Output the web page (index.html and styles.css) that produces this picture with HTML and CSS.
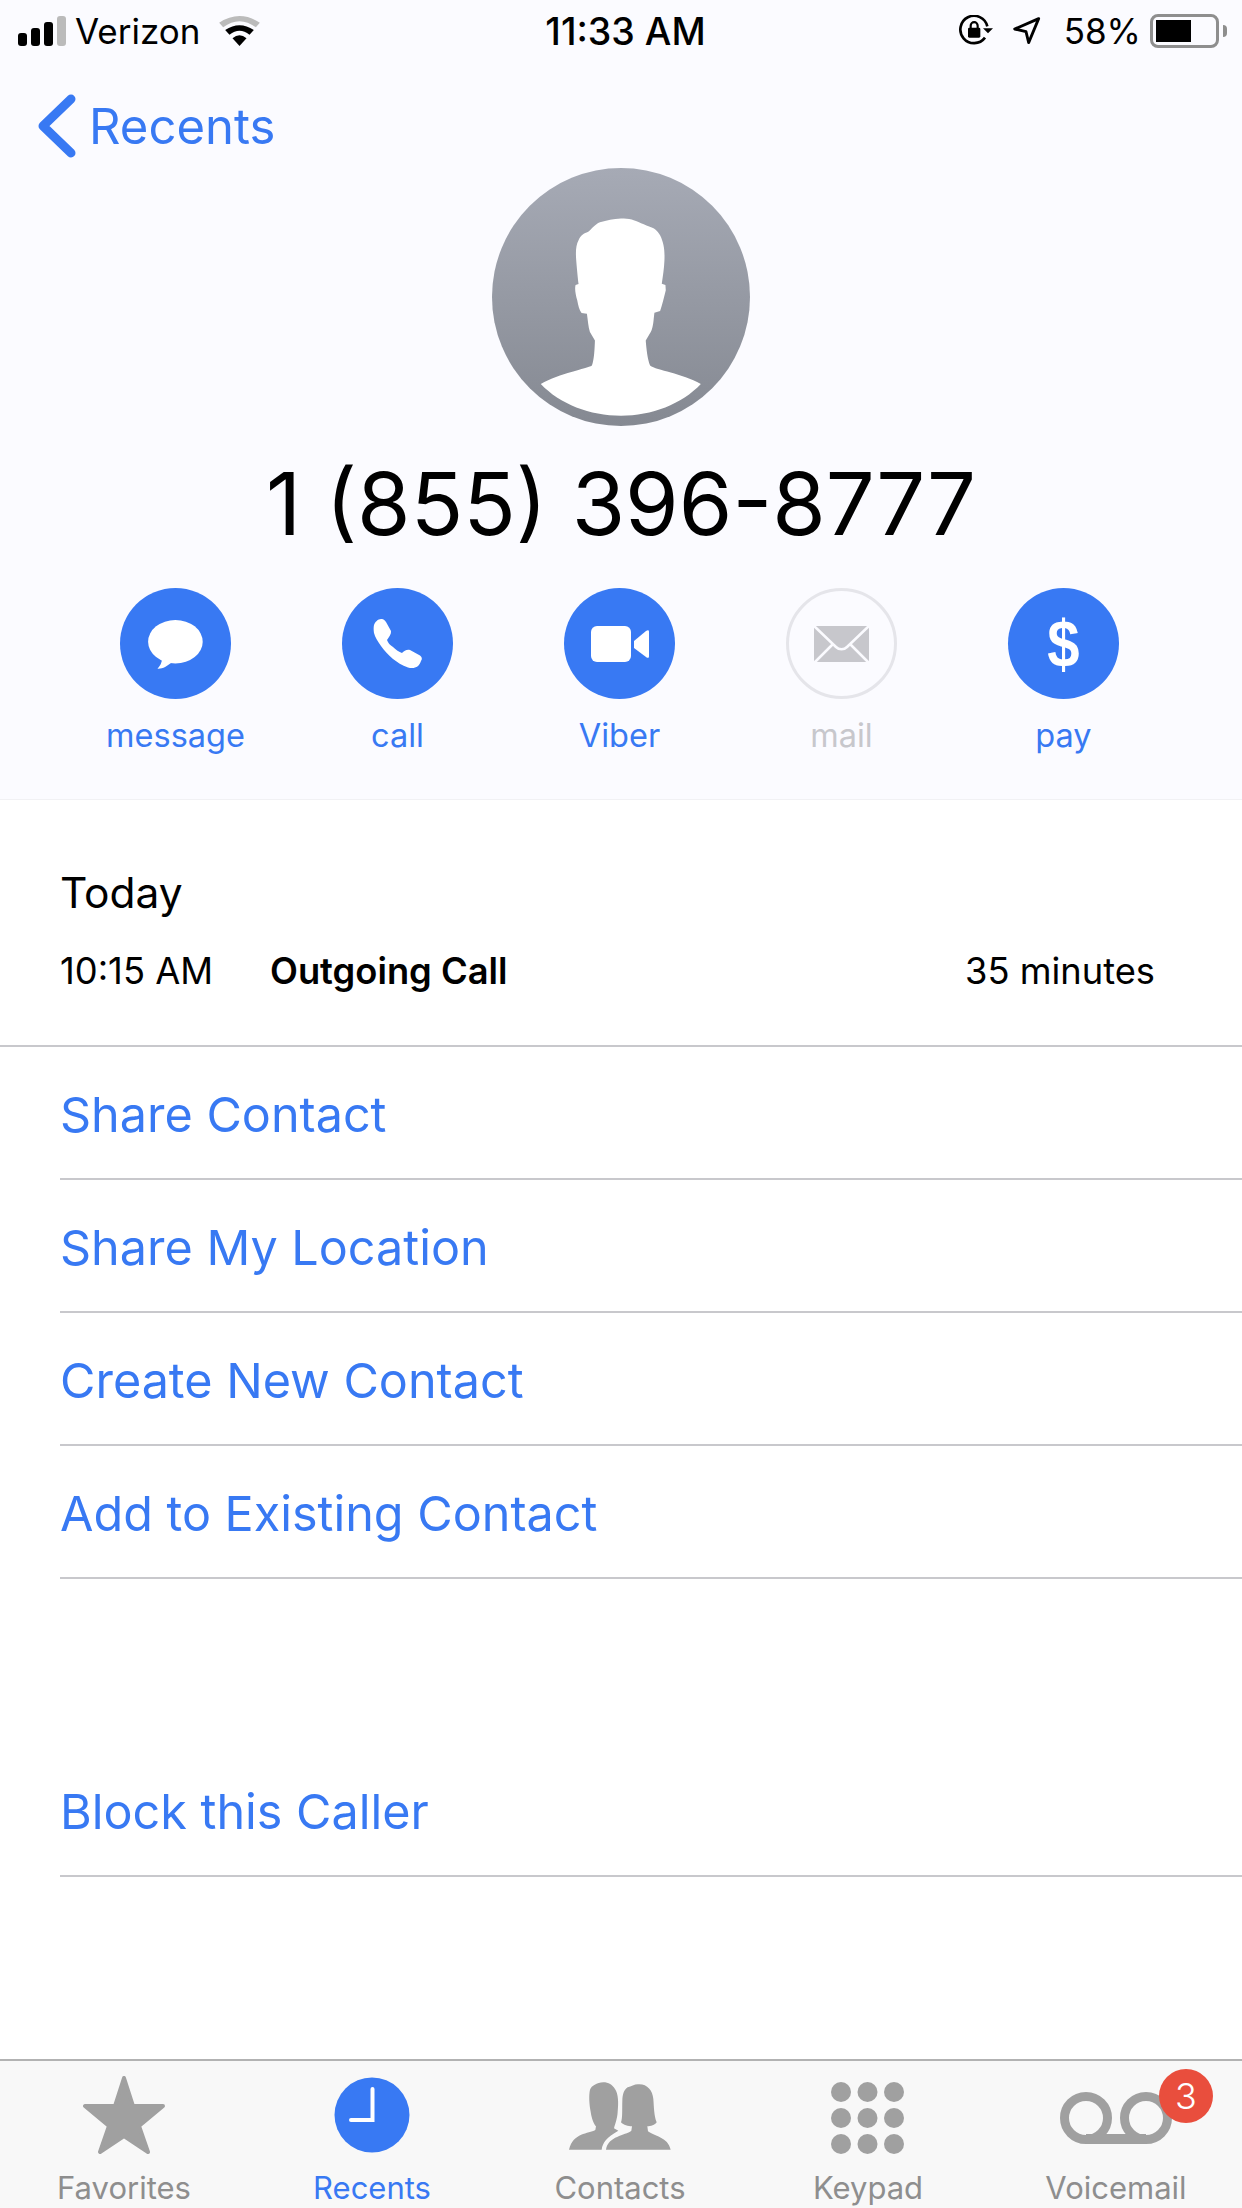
FILE: index.html
```html
<!doctype html>
<html lang="en">
 <head>
  <title>Recents</title>
  <link rel="stylesheet" href="styles.css">
 </head>
 <body>
 <div id="phone">
  <header class="contact-head">
   <div class="status-bar">
    <div class="status-left">
     <svg class="signal" width="48" height="30" viewBox="0 0 48 30">
      <rect x="0" y="17" width="9" height="13" rx="3"/>
      <rect x="13" y="12" width="9" height="18" rx="3"/>
      <rect x="26" y="6" width="9" height="24" rx="3"/>
      <rect x="39" y="0" width="9" height="30" rx="3" fill="#bbbbbb"/>
     </svg>
     <span class="carrier">Verizon</span>
     <svg class="wifi" width="41" height="30" viewBox="28 30 122 90">
      <path d="M28 50 Q89 10 150 50 L138 64 Q89 28 40 64Z" fill="#bbbbbb"/>
      <path d="M46 72 Q89 44 132 72 L119 86 Q89 62 59 86Z"/>
      <path d="M68 97 Q89 79 110 97 L89 120Z"/>
     </svg>
    </div>
    <div class="status-time">11:33 AM</div>
    <div class="status-right">
     <svg class="rotate-lock" width="34" height="32" viewBox="36 30 102 96">
      <path d="M114 98 A41 41 0 1 1 121 64" fill="none" stroke="#000" stroke-width="8"/>
      <path d="M108 70 L138 70 L123 85Z"/>
      <rect x="63" y="68" width="37" height="30" rx="4"/>
      <path d="M71 70 V62 A10.500 10.500 0 0 1 92 62 V70" fill="none" stroke="#000" stroke-width="6.500"/>
     </svg>
     <svg class="location" width="28" height="28" viewBox="198 36 84 84">
      <path d="M275 41 L203 72 L237 80 L245 113Z" fill="none" stroke="#000" stroke-width="8.500" stroke-linejoin="round"/>
     </svg>
     <span class="battery-pct">58%</span>
     <div class="battery"><div class="battery-fill"></div></div>
     <div class="battery-cap"></div>
    </div>
   </div>

   <nav class="back-nav">
    <svg width="38" height="64" viewBox="0 0 38 64">
     <path d="M33 5 L5 32 L33 59" fill="none" stroke="#3879f3" stroke-width="9" stroke-linecap="round" stroke-linejoin="round"/>
    </svg>
    <span class="back-label">Recents</span>
   </nav>

   <svg class="avatar" width="258" height="258" viewBox="97 54 772 772">
    <defs>
     <linearGradient id="avatarFill" x1="0" y1="0" x2="0" y2="1">
      <stop offset="0" stop-color="#a6aab5"/>
      <stop offset="1" stop-color="#858992"/>
     </linearGradient>
    </defs>
    <circle cx="483" cy="440" r="386" fill="url(#avatarFill)"/>
    <path fill="#fff" d="M483 205 C460 205 440 212 420 216 C405 222 395 236 385 245 C372 250 362 255 356 270 C348 285 347 305 349 330 C351 355 354 385 356 401 L347 404 C344 415 347 432 352 450 C355 465 358 480 365 488 L381 490 C384 510 385 530 390 545 L405 570 C404 595 403 625 396 645 C380 655 300 668 243 700 C300 760 390 795 483 795 C575 795 665 760 722 700 C665 668 590 660 570 645 C562 625 559 595 557 570 L572 545 C580 530 580 510 583 487 L600 482 C606 465 612 440 617 420 L616 404 L605 400 C608 380 612 355 613 330 C614 300 612 280 600 255 C590 240 585 236 575 232 C555 225 530 212 515 208 C505 205 495 205 483 205Z"/>
   </svg>

   <h1 class="phone-number">1 (855) 396-8777</h1>

   <div class="actions">
    <div class="action">
     <svg class="action-icon" viewBox="0 0 111 111">
      <circle cx="55.500" cy="55.500" r="55.500" fill="#3879f3"/>
      <ellipse cx="55.400" cy="53.700" rx="27.300" ry="21.700" fill="#fff"/>
      <path d="M42 70 C42 75 40 78 37.500 80.700 C43 81 47 78 51 75Z" fill="#fff"/>
     </svg>
     <span class="action-label">message</span>
    </div>
    <div class="action">
     <svg class="action-icon" viewBox="0 0 111 111">
      <circle cx="55.500" cy="55.500" r="55.500" fill="#3879f3"/>
      <path fill="#fff" d="M32 37 C33 34 36 31 39 31 C41 30.500 43 32 44 34 L49 43 C49.500 46 47 49 45 52 C46 55 48 57 51 59 C54 62 57 64 60 65 C62 63 65 61 68 62 L78 67.500 C80 69 80.500 71 79 73 C78 76 76 79 73 79.500 C71 80.500 68 80 66 79.500 C60 77.500 55 74 51 71 C46 67 42 62 39 58 C36 54 33 49 32 45 C31.500 42 31.500 39 32 37Z"/>
     </svg>
     <span class="action-label">call</span>
    </div>
    <div class="action">
     <svg class="action-icon" viewBox="0 0 111 111">
      <circle cx="55.500" cy="55.500" r="55.500" fill="#3879f3"/>
      <rect x="27" y="38" width="40" height="36" rx="6" fill="#fff"/>
      <path d="M70 53 L82 43 C84 41.500 85 42 85 44 V68 C85 70 84 70.500 82 69 L70 60Z" fill="#fff"/>
     </svg>
     <span class="action-label">Viber</span>
    </div>
    <div class="action">
     <svg class="action-icon" viewBox="0 0 111 111">
      <circle cx="55.500" cy="55.500" r="54" fill="none" stroke="#e5e5ea" stroke-width="3"/>
      <rect x="28" y="38" width="55" height="36" fill="#c7c7cc"/>
      <path d="M27 37 L50 59 C53 62 58 62 61 59 L84 37 M28 75 L47 56 M83 75 L64 56" fill="none" stroke="#fbfbff" stroke-width="2.500"/>
     </svg>
     <span class="action-label disabled">mail</span>
    </div>
    <div class="action">
     <div class="pay-icon"><span class="pay-sign">$</span></div>
     <span class="action-label">pay</span>
    </div>
   </div>
  </header>

  <main class="details">
   <section class="call-log">
    <div class="log-day">Today</div>
    <div class="log-row">
     <span class="log-time">10:15 AM</span>
     <span class="log-type">Outgoing Call</span>
     <span class="log-length">35 minutes</span>
    </div>
   </section>

   <div class="link-row">Share Contact</div>
   <div class="link-row">Share My Location</div>
   <div class="link-row">Create New Contact</div>
   <div class="link-row">Add to Existing Contact</div>
   <div class="link-row block-row">Block this Caller</div>
  </main>

  <footer class="tab-bar">
   <div class="tab">
    <svg class="tab-icon" width="84" height="80" viewBox="0 0 84 80">
     <path fill="#a0a0a0" stroke="#a0a0a0" stroke-width="4" stroke-linejoin="round" d="M42 4 L51 32 L81 32 L57 52 L66 78 L42 62 L18 78 L27 52 L3 32 L33 32Z"/>
    </svg>
    <span class="tab-label">Favorites</span>
   </div>
   <div class="tab active">
    <svg class="tab-icon" width="76" height="80" viewBox="0 0 76 80">
     <circle cx="38" cy="41" r="37.500" fill="#3879f3"/>
     <path d="M38.500 15 V46 H17" fill="none" stroke="#fff" stroke-width="4" stroke-linecap="round"/>
    </svg>
    <span class="tab-label">Recents</span>
   </div>
   <div class="tab">
    <svg class="tab-icon" width="102" height="80" viewBox="27 15 306 240">
     <path fill="#a0a0a0" d="M130 40 C110 42 95 50 90 62 C86 80 88 105 92 128 C95 150 102 165 108 172 L106 183 C85 195 40 190 27 242 L125 242 C128 220 140 205 175 185 L162 178 C165 165 172 150 173 128 C176 100 175 75 165 60 C158 48 145 40 130 40Z"/>
     <path fill="#a0a0a0" d="M238 46 C225 44 215 52 203 55 C192 62 188 75 187 95 C186 125 188 145 183 160 C190 168 205 172 216 172 L214 185 C195 200 145 200 138 242 L332 242 C325 205 280 200 264 187 L262 172 C272 172 285 168 290 160 C282 140 282 115 280 90 C278 65 262 46 238 46Z"/>
    </svg>
    <span class="tab-label">Contacts</span>
   </div>
   <div class="tab">
    <svg class="tab-icon" width="74" height="80" viewBox="0 -8 74 80">
     <g fill="#a0a0a0">
      <circle cx="10" cy="10" r="10"/><circle cx="36.500" cy="10" r="10"/><circle cx="63" cy="10" r="10"/>
      <circle cx="10" cy="36" r="10"/><circle cx="36.500" cy="36" r="10"/><circle cx="63" cy="36" r="10"/>
      <circle cx="10" cy="62" r="10"/><circle cx="36.500" cy="62" r="10"/><circle cx="63" cy="62" r="10"/>
     </g>
    </svg>
    <span class="tab-label">Keypad</span>
   </div>
   <div class="tab voicemail">
    <svg class="tab-icon" width="112" height="80" viewBox="0 -18 112 80">
     <circle cx="26" cy="26" r="21.500" fill="none" stroke="#a0a0a0" stroke-width="9"/>
     <circle cx="86" cy="26" r="21.500" fill="none" stroke="#a0a0a0" stroke-width="9"/>
     <rect x="26" y="42" width="60" height="10" fill="#a0a0a0"/>
    </svg>
    <span class="badge">3</span>
    <span class="tab-label">Voicemail</span>
   </div>
  </footer>
 </div>
 </body>
</html>
```

FILE: styles.css
```css
* {
  box-sizing: border-box;
}

body {
  margin: 0;
  font-family: Inter, "Liberation Sans", sans-serif;
  color: #000;
  background-color: #fff;
}

#phone {
  width: 1242px;
  height: 2208px;
  overflow: hidden;
  display: flex;
  flex-direction: column;
}

.contact-head {
  height: 800px;
  background-color: #fbfbff;
  border-bottom: 1px solid #f1f1f4;
  display: flex;
  flex-direction: column;
  align-items: center;
}

.status-bar {
  width: 100%;
  height: 62px;
  padding: 0 15px 0 18px;
  display: grid;
  grid-template-columns: 1fr auto 1fr;
  align-items: center;
  font-size: 35px;
}

.status-left {
  display: flex;
  align-items: center;
}

.carrier {
  margin-left: 9px;
}

.wifi {
  margin-left: 19px;
}

.status-time {
  margin-left: 6px;
  font-size: 37.500px;
  font-weight: 500;
}

.status-right {
  display: flex;
  align-items: center;
  justify-content: flex-end;
}

.location {
  margin-left: 20px;
}

.battery-pct {
  margin-left: 23px;
  margin-right: 9px;
}

.battery {
  width: 69px;
  height: 34px;
  border: 3px solid #8e8e8e;
  border-radius: 8px;
  padding: 3px;
}

.battery-fill {
  width: 35px;
  height: 100%;
  background-color: #000;
}

.battery-cap {
  width: 4px;
  height: 12px;
  margin-left: 4px;
  background-color: #8e8e8e;
  border-radius: 0 4px 4px 0;
}

.back-nav {
  align-self: flex-start;
  height: 64px;
  margin-top: 32px;
  margin-left: 38px;
  display: flex;
  align-items: center;
  gap: 13px;
}

.back-label {
  font-size: 49px;
  color: #3879f3;
}

.avatar {
  margin-top: 10px;
  flex-shrink: 0;
}

.phone-number {
  margin: 28px 0 0 0;
  font-size: 86.500px;
  line-height: 100px;
  font-weight: 380;
}

.actions {
  align-self: flex-start;
  margin-top: 34px;
  padding-left: 64.500px;
  display: flex;
}

.action {
  width: 222px;
  display: flex;
  flex-direction: column;
  align-items: center;
}

.action-icon {
  width: 111px;
  height: 111px;
}

.pay-icon {
  width: 111px;
  height: 111px;
  border-radius: 50%;
  background-color: #3879f3;
  color: #fff;
  display: flex;
  align-items: center;
  justify-content: center;
  font-family: "Liberation Sans", sans-serif;
  font-size: 66px;
  font-weight: bold;
}

.pay-sign {
  transform: scaleX(0.88);
}

.action-label {
  margin-top: 18px;
  font-size: 32.500px;
  line-height: 38px;
  color: #3879f3;
}

.action-label.disabled {
  color: #c7c7cc;
}

.details {
  flex: 1;
}

.call-log {
  height: 247px;
  padding: 68px 87px 0 60px;
  border-bottom: 2px solid #c8c8cc;
}

.log-day {
  font-size: 42.500px;
  line-height: 50px;
}

.log-row {
  margin-top: 33px;
  display: flex;
  font-size: 36.300px;
  line-height: 40px;
}

.log-time {
  width: 210px;
}

.log-type {
  font-weight: 600;
}

.log-length {
  margin-left: auto;
}

.link-row {
  height: 133px;
  margin-left: 60px;
  padding-top: 3px;
  border-bottom: 2px solid #c8c8cc;
  display: flex;
  align-items: center;
  font-size: 48.500px;
  color: #3879f3;
}

.block-row {
  margin-top: 165px;
}

.tab-bar {
  height: 149px;
  background-color: #f8f8f8;
  border-top: 2px solid #b2b2b2;
  display: flex;
}

.tab {
  width: 248px;
  padding-top: 13px;
  position: relative;
  display: flex;
  flex-direction: column;
  align-items: center;
}

.tab-icon {
  flex-shrink: 0;
}

.tab-label {
  margin-top: 15px;
  font-size: 31px;
  line-height: 38px;
  color: #8e8e8e;
}

.tab.active .tab-label {
  color: #3879f3;
}

.badge {
  position: absolute;
  left: 167px;
  top: 8px;
  width: 54px;
  height: 54px;
  border-radius: 50%;
  background-color: #e94e3d;
  color: #fff;
  font-size: 36px;
  font-weight: 300;
  display: flex;
  align-items: center;
  justify-content: center;
}
```
